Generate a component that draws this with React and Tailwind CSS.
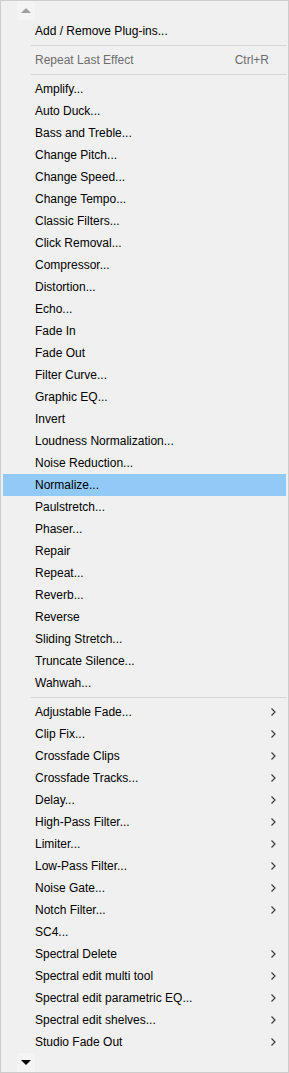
import React from 'react';

const effects = [
  'Amplify...', 'Auto Duck...', 'Bass and Treble...', 'Change Pitch...', 'Change Speed...',
  'Change Tempo...', 'Classic Filters...', 'Click Removal...', 'Compressor...', 'Distortion...',
  'Echo...', 'Fade In', 'Fade Out', 'Filter Curve...', 'Graphic EQ...', 'Invert',
  'Loudness Normalization...', 'Noise Reduction...', 'Normalize...', 'Paulstretch...',
  'Phaser...', 'Repair', 'Repeat...', 'Reverb...', 'Reverse', 'Sliding Stretch...',
  'Truncate Silence...', 'Wahwah...',
];

const plugins = [
  ['Adjustable Fade...', true], ['Clip Fix...', true], ['Crossfade Clips', true],
  ['Crossfade Tracks...', true], ['Delay...', true], ['High-Pass Filter...', true],
  ['Limiter...', true], ['Low-Pass Filter...', true], ['Noise Gate...', true],
  ['Notch Filter...', true], ['SC4...', false], ['Spectral Delete', true],
  ['Spectral edit multi tool', true], ['Spectral edit parametric EQ...', true],
  ['Spectral edit shelves...', true], ['Studio Fade Out', true],
];

const Chevron = () => (
  <svg width="5" height="8" viewBox="0 0 5 8" className="shrink-0">
    <path d="M0.5 0.5 L4 4 L0.5 7.5" fill="none" stroke="#3c3c3c" strokeWidth="1.2" />
  </svg>
);

const Item = ({ label, active, disabled, shortcut, sub }) => (
  <div
    className={`mx-[2px] h-[22px] flex items-center pl-[32px] pr-[10px] ${active ? 'bg-[#91c9f7]' : ''} ${disabled ? 'text-[#6d6d6d]' : 'text-black'}`}
  >
    <span className="flex-1 whitespace-nowrap">{label}</span>
    {shortcut && <span className="mr-[7px]">{shortcut}</span>}
    {sub && <Chevron />}
  </div>
);

const Sep = () => (
  <div className="h-[7px] pl-[30px] pr-[1px] pt-[3px]">
    <div className="h-px bg-[#d7d7d7]" />
  </div>
);

export default function App() {
  return (
    <div
      className="w-[289px] h-[1073px] border border-[#cccccc] bg-[#f0f0f0] flex flex-col text-[12px] leading-[22px]"
      style={{ fontFamily: '"Liberation Sans", Arial, sans-serif' }}
    >
      <div className="h-[19px] flex">
        <div className="ml-[16px] w-[18px] h-[19px] bg-[#f4f4f4] flex items-center justify-center">
          <svg width="10" height="5" viewBox="0 0 10 5"><path d="M5 0 L10 5 L0 5 Z" fill="#a0a0a0" /></svg>
        </div>
      </div>
      <Item label="Add / Remove Plug-ins..." />
      <Sep />
      <Item label="Repeat Last Effect" shortcut="Ctrl+R" disabled />
      <Sep />
      {effects.map((e) => (
        <Item key={e} label={e} active={e === 'Normalize...'} />
      ))}
      <Sep />
      {plugins.map(([p, s]) => (
        <Item key={p} label={p} sub={s} />
      ))}
      <div className="h-[19px] flex">
        <div className="ml-[16px] w-[18px] h-[19px] bg-[#f4f4f4] flex items-center justify-center">
          <svg width="10" height="5" viewBox="0 0 10 5"><path d="M0 0 L10 0 L5 5 Z" fill="#000000" /></svg>
        </div>
      </div>
    </div>
  );
}
